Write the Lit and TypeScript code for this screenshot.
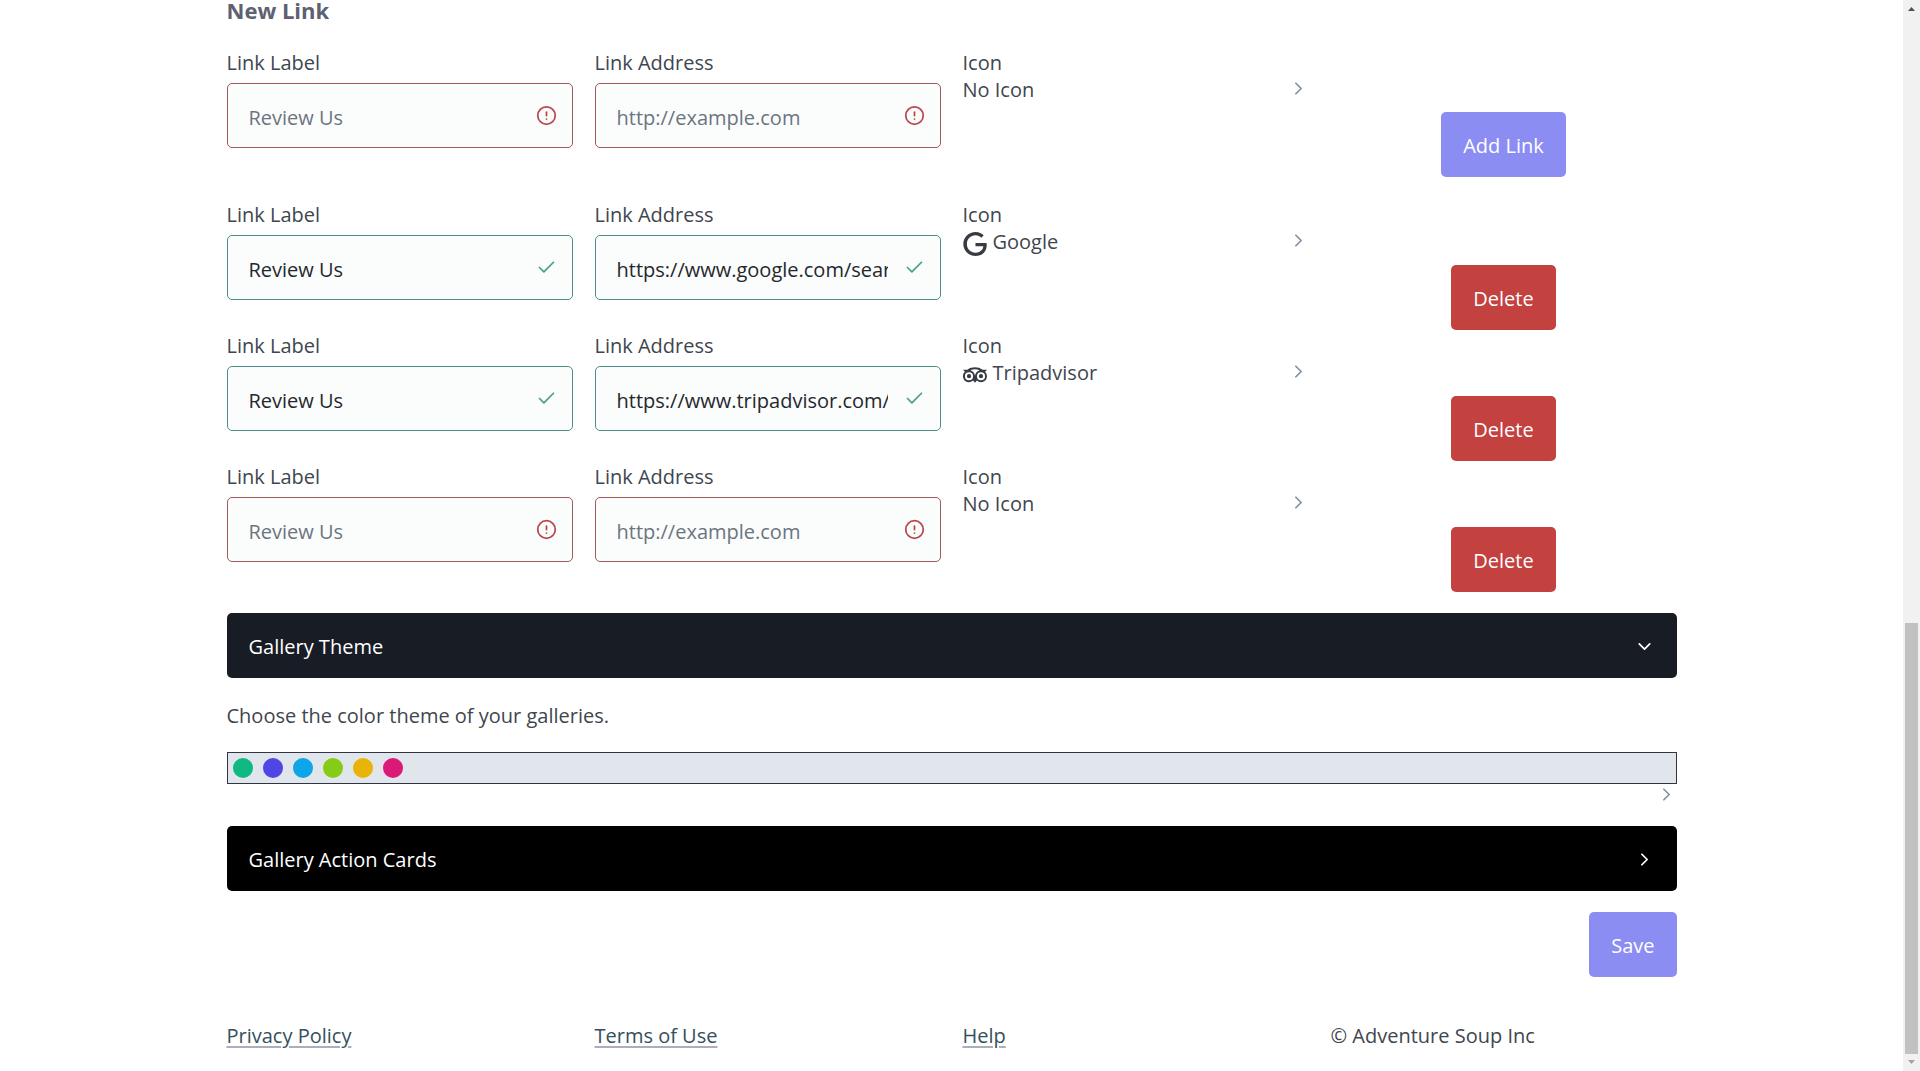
import { LitElement, html, css, svg, nothing } from "lit";
import { customElement, property } from "lit/decorators.js";

type IconName = "none" | "google" | "tripadvisor";

interface LinkEntry {
  id: string;
  label: string;
  address: string;
  icon: IconName;
}

const savedLinks: LinkEntry[] = [
  { id: "link-1", label: "Review Us", address: "https://www.google.com/search", icon: "google" },
  { id: "link-2", label: "Review Us", address: "https://www.tripadvisor.com/UserReview", icon: "tripadvisor" },
  { id: "link-3", label: "", address: "", icon: "none" },
];

const themeColors = ["#10b981", "#4f46e5", "#0ea5e9", "#84cc16", "#eab308", "#db1a78"];

const iconNames: Record<IconName, string> = {
  none: "No Icon",
  google: "Google",
  tripadvisor: "Tripadvisor",
};

const brandPaths: Record<IconName, string> = {
  none: "",
  google:
    "M12.48 10.92v3.28h7.84c-.24 1.84-.853 3.187-1.787 4.133-1.147 1.147-2.933 2.4-6.053 2.4-4.827 0-8.6-3.893-8.6-8.72s3.773-8.72 8.6-8.72c2.6 0 4.507 1.027 5.907 2.347l2.307-2.307C18.747 1.44 16.133 0 12.48 0 5.867 0 .307 5.387.307 12s5.56 12 12.173 12c3.573 0 6.267-1.173 8.373-3.36 2.16-2.16 2.84-5.213 2.84-7.667 0-.76-.053-1.467-.173-2.053H12.48z",
  tripadvisor:
    "M12.006 4.295c-2.67 0-5.338.784-7.645 2.353H0l1.963 2.135a5.997 5.997 0 0 0 4.04 10.43 5.976 5.976 0 0 0 4.075-1.6L12 19.705l1.922-2.09a5.972 5.972 0 0 0 4.072 1.598 6 6 0 0 0 6-5.998 5.982 5.982 0 0 0-1.957-4.432L24 6.648h-4.35a13.573 13.573 0 0 0-7.644-2.353zM12 6.255c1.531 0 3.063.303 4.504.903C13.943 8.138 12 10.43 12 13.1c0-2.671-1.942-4.962-4.504-5.942A11.72 11.72 0 0 1 12 6.256zM6.002 9.157a4.059 4.059 0 1 1 0 8.118 4.059 4.059 0 0 1 0-8.118zm11.992.002a4.057 4.057 0 1 1 .003 8.115 4.057 4.057 0 0 1-.003-8.115zm-11.992 1.93a2.128 2.128 0 0 0 0 4.256 2.128 2.128 0 0 0 0-4.256zm11.992 0a2.128 2.128 0 0 0 0 4.256 2.128 2.128 0 0 0 0-4.256z",
};

const strokeIcon = (name: string, shape: unknown) => html`
  <svg class="stroke-icon ${name}" viewBox="0 0 24 24" width="21" height="21" aria-hidden="true">${shape}</svg>
`;

const chevronRight = () => strokeIcon("chevron", svg`<polyline points="9 6 15 12 9 18"></polyline>`);
const chevronDown = () => strokeIcon("chevron", svg`<polyline points="6 9 12 15 18 9"></polyline>`);
const checkMark = () => strokeIcon("status check", svg`<polyline points="20 6 9 17 4 12"></polyline>`);
const alertMark = () =>
  strokeIcon(
    "status alert",
    svg`<circle cx="12" cy="12" r="10"></circle><line x1="12" y1="8" x2="12" y2="12"></line><line x1="12" y1="16" x2="12.01" y2="16"></line>`,
  );

const shared = css`
  *,
  *::before,
  *::after {
    box-sizing: border-box;
  }
  button,
  input {
    font: inherit;
    margin: 0;
  }
  button {
    cursor: pointer;
  }
  .stroke-icon {
    display: block;
    flex: none;
    fill: none;
    stroke: currentColor;
    stroke-width: 2;
    stroke-linecap: round;
    stroke-linejoin: round;
  }
  .button {
    height: 65px;
    padding: 2px 22px 0;
    border: 0;
    border-radius: 5px;
    color: #fff;
    line-height: 32px;
  }
  .primary {
    background: #8b8df2;
  }
  .danger {
    background: #c3413f;
  }
`;

@customElement("link-row")
export class LinkRow extends LitElement {
  @property({ attribute: false }) entry!: LinkEntry;
  @property({ type: Boolean }) draft = false;

  static styles = [
    shared,
    css`
      :host {
        display: block;
      }
      .row {
        display: grid;
        grid-template-columns: repeat(4, minmax(0, 1fr));
        column-gap: 22px;
        align-items: start;
      }
      .label {
        display: block;
        line-height: 27px;
      }
      .control {
        display: grid;
        align-items: center;
        margin-top: 7px;
      }
      .input {
        grid-area: 1 / 1;
        width: 100%;
        height: 65px;
        padding: 4px 52px 0 21px;
        border: 1px solid #4f8f8b;
        border-radius: 5px;
        background: #fbfcfc;
        color: #24282e;
        outline: 0;
      }
      .input::placeholder {
        color: #6b7580;
        opacity: 1;
      }
      .invalid .input {
        border-color: #a2585c;
      }
      .status {
        grid-area: 1 / 1;
        justify-self: end;
        margin-right: 16px;
        pointer-events: none;
      }
      .check {
        color: #4f9d8d;
      }
      .alert {
        color: #b9474a;
      }
      .picker {
        display: flex;
        align-items: flex-start;
        justify-content: space-between;
        width: 100%;
        height: 27px;
        padding: 0;
        border: 0;
        background: none;
        color: inherit;
        line-height: 27px;
        text-align: left;
      }
      .picker .chevron {
        margin-top: 2px;
      }
      .choice {
        display: flex;
        align-items: flex-start;
        gap: 6px;
      }
      .brand {
        display: block;
        margin-top: 4px;
        fill: #373c44;
      }
      .chevron {
        color: #8290a0;
      }
      .action {
        display: flex;
        justify-content: center;
        padding-top: 64px;
      }
      .draft {
        padding-top: 63px;
      }
    `,
  ];

  private field(name: string, placeholder: string, value: string) {
    const id = `${this.entry.id}-${name.toLowerCase().replace(" ", "-")}`;
    const valid = value !== "";
    return html`
      <div class="field ${valid ? "valid" : "invalid"}">
        <label class="label" for=${id}>${name}</label>
        <div class="control">
          <input class="input" id=${id} type="text" placeholder=${placeholder} .value=${value} aria-invalid=${valid ? "false" : "true"} />
          ${valid ? checkMark() : alertMark()}
        </div>
      </div>
    `;
  }

  render() {
    const { id, label, address, icon } = this.entry;
    return html`
      <div class="row">
        ${this.field("Link Label", "Review Us", label)}
        ${this.field("Link Address", "http://example.com", address)}
        <div class="field">
          <label class="label" for="${id}-icon">Icon</label>
          <button class="picker" id="${id}-icon" type="button" aria-haspopup="listbox">
            <span class="choice">
              ${icon === "none"
                ? nothing
                : html`<svg class="brand" viewBox="0 0 24 24" width="24" height="24" aria-hidden="true"><path d=${brandPaths[icon]}></path></svg>`}
              <span>${iconNames[icon]}</span>
            </span>
            ${chevronRight()}
          </button>
        </div>
        <div class="action ${this.draft ? "draft" : ""}">
          ${this.draft
            ? html`<button class="button primary" type="button">Add Link</button>`
            : html`<button class="button danger" type="button">Delete</button>`}
        </div>
      </div>
    `;
  }
}

@customElement("app-root")
export class AppRoot extends LitElement {
  static styles = [
    shared,
    css`
      :host {
        display: flex;
        min-height: 100vh;
        background: #fff;
        color: #40464e;
        font-family: "Open Sans", "Noto Sans", sans-serif;
        font-size: 20px;
        line-height: 32px;
      }
      .page {
        flex: 1;
        min-width: 0;
      }
      .content {
        max-width: 1450px;
        margin: 0 auto;
      }
      .title {
        margin: 0 0 29px;
        color: #5d6170;
        font-size: 22px;
        font-weight: 700;
        line-height: 20px;
      }
      .saved {
        display: flex;
        flex-direction: column;
        gap: 2px;
        margin: 24px 0 21px;
      }
      .accordion {
        display: flex;
        align-items: center;
        justify-content: space-between;
        width: 100%;
        text-align: left;
      }
      .open {
        background: #181c25;
      }
      .closed {
        background: #000;
      }
      .accordion .chevron {
        color: #fff;
      }
      .hint {
        margin: 22px 0 20px;
      }
      .theme {
        display: block;
        width: 100%;
        margin-bottom: 21px;
        padding: 0;
        border: 0;
        background: none;
      }
      .swatches {
        display: flex;
        gap: 10px;
        padding: 5px;
        border: 1px solid #2f3542;
        background: #e1e5ec;
      }
      .swatch {
        width: 20px;
        height: 20px;
        border-radius: 50%;
      }
      .more {
        display: flex;
        justify-content: flex-end;
        color: #8290a0;
      }
      .actions {
        display: flex;
        justify-content: flex-end;
        margin-top: 21px;
      }
      .footer {
        display: grid;
        grid-template-columns: repeat(4, minmax(0, 1fr));
        column-gap: 22px;
        margin-top: 43px;
      }
      .link {
        color: #34505c;
        text-decoration: underline 2px #acaebe;
        text-underline-offset: 3px;
      }
      .scrollbar {
        display: flex;
        flex: none;
        flex-direction: column;
        width: 17px;
        background: #f1f1f1;
      }
      .arrow {
        display: block;
        flex: none;
        fill: #505050;
      }
      .end {
        fill: #a3a3a3;
      }
      .before {
        flex: 606;
      }
      .thumb {
        flex: 431;
        margin: 0 2px;
        background: #c1c1c1;
      }
    `,
  ];

  render() {
    return html`
      <div class="page">
        <div class="content">
          <main>
            <h2 class="title">New Link</h2>
            <link-row draft .entry=${{ id: "new-link", label: "", address: "", icon: "none" } as LinkEntry}></link-row>
            <div class="saved">${savedLinks.map((entry) => html`<link-row .entry=${entry}></link-row>`)}</div>
            <button class="button accordion open" type="button" aria-expanded="true">
              <span>Gallery Theme</span>${chevronDown()}
            </button>
            <p class="hint">Choose the color theme of your galleries.</p>
            <button class="theme" type="button" aria-label="Color theme">
              <span class="swatches">
                ${themeColors.map((color) => html`<span class="swatch" style="background:${color}"></span>`)}
              </span>
              <span class="more">${chevronRight()}</span>
            </button>
            <button class="button accordion closed" type="button" aria-expanded="false">
              <span>Gallery Action Cards</span>${chevronRight()}
            </button>
            <div class="actions"><button class="button primary" type="submit">Save</button></div>
          </main>
          <footer class="footer">
            <span><a class="link" href="#privacy">Privacy Policy</a></span>
            <span><a class="link" href="#terms">Terms of Use</a></span>
            <span><a class="link" href="#help">Help</a></span>
            <span>© Adventure Soup Inc</span>
          </footer>
        </div>
      </div>
      <div class="scrollbar" aria-hidden="true">
        <svg class="arrow" viewBox="0 0 17 17" width="17" height="17"><path d="M5 11l3.500-4 3.500 4z"></path></svg>
        <div class="before"></div>
        <div class="thumb"></div>
        <svg class="arrow end" viewBox="0 0 17 17" width="17" height="17"><path d="M5 6l3.500 4 3.500-4z"></path></svg>
      </div>
    `;
  }
}
